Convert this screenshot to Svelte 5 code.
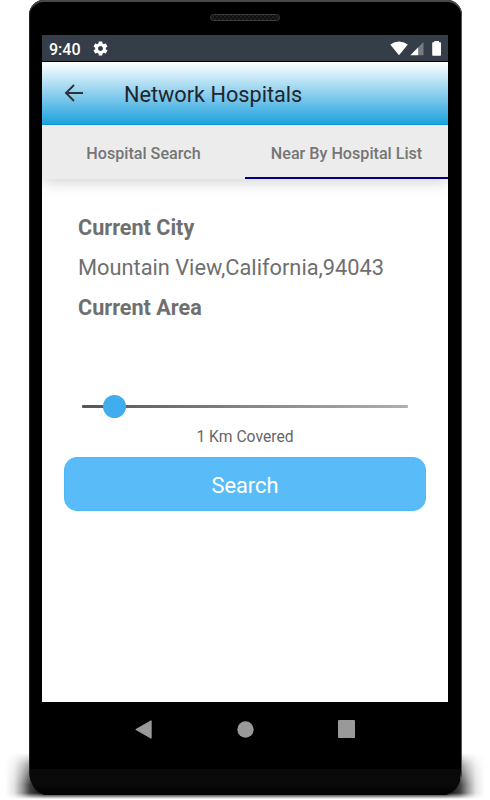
<script lang="ts">
  let tabs = ['Hospital Search', 'Near By Hospital List'];
  let activeTab = $state(1);

  const city = 'Mountain View,California,94043';
  const distance = 1;
  const maxDistance = 10;
</script>

<div class="stage">
  <div class="shadow"></div>
  <div class="phone">
    <div class="bezel">
      <svg class="speaker" width="70" height="7" viewBox="0 0 70 7">
        <defs>
          <pattern id="mesh" width="4" height="4" patternUnits="userSpaceOnUse">
            <rect width="4" height="4" fill="#101010" />
            <circle cx="1" cy="1" r="0.7" fill="#353535" />
            <circle cx="3" cy="3" r="0.7" fill="#353535" />
          </pattern>
        </defs>
        <rect x="0.5" y="0.5" width="69" height="6" rx="3" fill="url(#mesh)" stroke="#3c3c3c" />
      </svg>
    </div>

    <div class="screen">
      <div class="status-bar">
        <span class="time">9:40</span>
        <svg class="gear" width="17" height="17" viewBox="0 0 24 24">
          <path fill="#fff" d="M19.43 12.98c.04-.32.07-.64.07-.98s-.03-.66-.07-.98l2.11-1.65c.19-.15.24-.42.12-.64l-2-3.46c-.12-.22-.39-.3-.61-.22l-2.49 1c-.52-.4-1.08-.73-1.69-.98l-.38-2.65C14.46 2.18 14.25 2 14 2h-4c-.25 0-.46.18-.49.42l-.38 2.65c-.61.25-1.17.59-1.69.98l-2.49-1c-.23-.09-.49 0-.61.22l-2 3.46c-.13.22-.07.49.12.64l2.11 1.65c-.04.32-.07.65-.07.98s.03.66.07.98l-2.11 1.65c-.19.15-.24.42-.12.64l2 3.46c.12.22.39.3.61.22l2.49-1c.52.4 1.08.73 1.69.98l.38 2.65c.03.24.24.42.49.42h4c.25 0 .46-.18.49-.42l.38-2.65c.61-.25 1.17-.59 1.69-.98l2.49 1c.23.09.49 0 .61-.22l2-3.46c.12-.22.07-.49-.12-.64l-2.11-1.65zM12 15.5c-1.93 0-3.5-1.57-3.5-3.5s1.57-3.5 3.5-3.5 3.5 1.57 3.5 3.5-1.57 3.5-3.5 3.5z" />
        </svg>
        <svg class="signals" width="52" height="17" viewBox="0 0 52 17">
          <path fill="#fff" d="M0.2 4.6Q9 -1.8 17.8 4.6L9 15.2Z" />
          <path fill="#fff" d="M20.3 15.2L28.5 7V15.2Z" />
          <path fill="#747b82" d="M28.5 7L33.5 2V15.2H28.5Z" />
          <path fill="#fff" d="M44.2 1H49V2.2H50.3Q51 2.2 51 3V15Q51 15.8 50.2 15.8H43Q42.2 15.8 42.2 15V3Q42.2 2.2 43 2.2H44.2Z" />
        </svg>
      </div>

      <header class="app-bar">
        <svg width="20" height="18" viewBox="0 0 20 18">
          <path d="M19 9H2M10 1L2 9L10 17" fill="none" stroke="#2c3238" stroke-width="1.9" />
        </svg>
        <h1>Network Hospitals</h1>
      </header>

      <nav class="tabs">
        {#each tabs as tab, i}
          <button class="tab" class:active={activeTab === i} onclick={() => (activeTab = i)}>
            <span>{tab}</span>
          </button>
        {/each}
      </nav>

      <main class="content">
        <div class="location">
          <div class="label">Current City</div>
          <div class="value">{city}</div>
          <div class="label">Current Area</div>
        </div>

        <div class="slider">
          <div class="track"></div>
          <div class="thumb" style="left: {(distance / maxDistance) * 100}%"></div>
        </div>
        <div class="covered">{distance} Km Covered</div>

        <button class="search">Search</button>
      </main>
    </div>

    <div class="nav-keys">
      <svg width="17" height="19" viewBox="0 0 17 19">
        <path d="M1.2 9.5L16 1V18Z" fill="#999" stroke="#999" stroke-width="1.4" stroke-linejoin="round" />
      </svg>
      <svg width="17" height="17" viewBox="0 0 17 17">
        <circle cx="8.5" cy="8.5" r="8.2" fill="#999" />
      </svg>
      <svg width="17" height="18" viewBox="0 0 17 18">
        <rect width="17" height="18" rx="1" fill="#999" />
      </svg>
    </div>
    <div class="chin"></div>
  </div>
</div>

<style>
  :global(body) {
    background: #fff;
    overflow: hidden;
  }

  .stage {
    position: relative;
    width: 490px;
    height: 800px;
    overflow: hidden;
    box-sizing: border-box;
    padding-left: 29px;
    font-family: Roboto, sans-serif;
  }

  /* ground shadow that spreads past the lower corners */
  .shadow {
    position: absolute;
    left: 5px;
    top: 753px;
    width: 480px;
    height: 47px;
    background: linear-gradient(
      90deg,
      transparent,
      rgba(0, 0, 0, 0.1) 9px,
      rgba(0, 0, 0, 0.38) 17px,
      rgba(0, 0, 0, 0.75) 25px,
      #000 40px,
      #000 440px,
      rgba(0, 0, 0, 0.75) 455px,
      rgba(0, 0, 0, 0.38) 463px,
      rgba(0, 0, 0, 0.1) 471px,
      transparent
    );
    mask-image: linear-gradient(transparent, rgba(0, 0, 0, 0.5) 12px, #000 32px, #000 40px, rgba(0, 0, 0, 0.5) 43px, transparent 46px);
  }

  .phone {
    position: relative;
    width: 433px;
    height: 795px;
    box-sizing: border-box;
    display: flex;
    flex-direction: column;
    align-items: center;
    padding-right: 1px;
    background: #000;
    border-radius: 15px 15px 18px 18px / 15px 15px 25px 25px;
    box-shadow: inset 0 2px 0 #484848, inset -1px 0 0 #555, inset 1px 0 0 #222;
    overflow: hidden;
  }

  .bezel {
    height: 35px;
    flex: none;
    box-sizing: border-box;
    padding-top: 14px;
  }

  .speaker {
    display: block;
  }

  .screen {
    width: 406px;
    height: 667px;
    flex: none;
    display: flex;
    flex-direction: column;
    background: #fff;
  }

  .status-bar {
    height: 27px;
    flex: none;
    box-sizing: border-box;
    display: flex;
    align-items: center;
    padding: 0 6px 0 7px;
    background: #353e48;
    border-bottom: 1px solid #000;
  }

  .time {
    width: 43px;
    padding-top: 2px;
    color: #fff;
    font-size: 16px;
    font-weight: 500;
    line-height: 27px;
  }

  .signals {
    margin-left: auto;
  }

  .app-bar {
    height: 63px;
    flex: none;
    box-sizing: border-box;
    display: flex;
    align-items: center;
    gap: 40px;
    padding-left: 22px;
    background: linear-gradient(#fff, #1ea1dd);
    border-bottom: 1px solid #0b95d8;
  }

  h1 {
    margin: 4px 0 0;
    color: #20252b;
    font-size: 21.7px;
    font-weight: 400;
    line-height: 30px;
  }

  .tabs {
    height: 54px;
    flex: none;
    display: flex;
    background: #ececec;
    box-shadow: 0 3px 14px rgba(0, 0, 0, 0.18);
    clip-path: inset(0 0 -24px 0);
  }

  .tab {
    flex: 1;
    box-sizing: border-box;
    padding: 5px 0 0;
    border: 0;
    border-bottom: 2px solid transparent;
    background: none;
    color: #757575;
    font: 500 16.15px/24px Roboto, sans-serif;
  }

  .tab.active {
    border-bottom-color: #00007f;
  }

  .content {
    display: flex;
    flex-direction: column;
    padding: 29px 22px 0;
  }

  .location {
    height: 186px;
    padding-left: 14px;
    color: #6f6f6f;
    font-size: 21.8px;
    line-height: 40px;
  }

  .label {
    font-size: 21.6px;
    font-weight: 700;
  }

  .slider {
    position: relative;
    height: 24px;
    margin: 0 18px;
    display: flex;
    align-items: center;
  }

  .track {
    width: 100%;
    height: 3px;
    border-radius: 1px;
    background: linear-gradient(90deg, #555, #898383 50%, #b5adad);
  }

  .thumb {
    position: absolute;
    top: 1px;
    width: 23px;
    height: 23px;
    margin-left: -12px;
    border-radius: 50%;
    background: #40aeee;
  }

  .covered {
    height: 39px;
    color: #666;
    font-size: 15.7px;
    line-height: 38px;
    text-align: center;
  }

  .search {
    height: 54px;
    padding: 3px 0 0;
    border: 1px solid #4ab9f8;
    border-radius: 13px;
    background: #59bcf8;
    color: #fff;
    font: 400 21.8px/30px Roboto, sans-serif;
  }

  .nav-keys {
    width: 220px;
    height: 54px;
    flex: none;
    display: flex;
    align-items: center;
    justify-content: space-between;
  }

  .chin {
    width: 430px;
    flex: 1;
    margin-top: 13px;
    background: linear-gradient(#090909, #0a0a0a 60%, #000);
  }
</style>
